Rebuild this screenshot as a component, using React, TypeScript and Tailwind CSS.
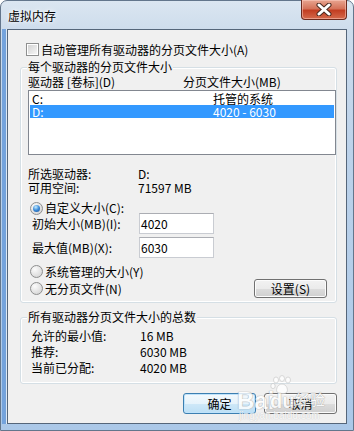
import React from "react";

function CheckBox() {
  return (
    <span className="flex h-[13px] w-[13px] shrink-0 items-center justify-center border border-[#8e8f8f] bg-white">
      <span className="h-[9px] w-[9px] bg-[linear-gradient(135deg,#d3d3d3,#f5f5f5)]" />
    </span>
  );
}

function Radio({ checked }: { checked?: boolean }) {
  return (
    <span className="flex h-[13px] w-[13px] shrink-0 items-center justify-center rounded-full border border-[#8e8f8f] bg-[radial-gradient(circle_at_35%_30%,#fbfbfb,#dcdcdc_70%,#cfcfcf)]">
      {checked && (
        <span className="h-[7px] w-[7px] rounded-full bg-[radial-gradient(circle_at_40%_30%,#c4ecff,#3a8ad8_50%,#1b4f92)]" />
      )}
    </span>
  );
}

function WinButton({ label, def }: { label: string; def?: boolean }) {
  return (
    <div
      className={
        def
          ? "flex h-[21px] w-[73px] items-center justify-center rounded-[3px] border border-[#3c7fb1] bg-[linear-gradient(180deg,#f3f9fd_0%,#e6f3fb_50%,#cfe8f8_50%,#bcdff5_100%)] shadow-[inset_0_0_0_1px_#bfe3fb]"
          : "flex h-[21px] w-[73px] items-center justify-center rounded-[3px] border border-[#707070] bg-[linear-gradient(180deg,#f2f2f2_0%,#ebebeb_50%,#dddddd_50%,#cfcfcf_100%)] shadow-[inset_0_0_0_1px_#fcfcfc]"
      }
    >
      <span className="text-[12px] leading-[12px] text-black">{label}</span>
    </div>
  );
}

function TextBox({ value }: { value: string }) {
  return (
    <div className="flex h-[21px] w-[75px] items-center border border-[#c9ccd2] border-t-[#abadb3] bg-white pl-[1px]">
      <span className="text-[12px] leading-[12px]">{value}</span>
    </div>
  );
}

export default function App() {
  return (
    <div className="h-[431px] w-[354px] overflow-hidden bg-white font-['Noto_Sans_CJK_SC','Noto_Sans',sans-serif] text-[12px] leading-[12px] text-black">
      <div className="relative flex h-[431px] w-[354px] flex-col rounded-t-[7px] border border-[#63768c] bg-[linear-gradient(180deg,#dbe6f1_0%,#cddcec_7%,#bcd2ea_35%,#abc8e8_100%)] pb-[6px] pl-[6px] pr-[6px]">
        {/* title bar */}
        <div className="flex h-[28px] shrink-0 items-start justify-between">
          <span className="ml-[1px] mt-[9px] text-[12px] leading-[12px] text-black [text-shadow:0_0_6px_#ffffff,0_0_3px_#ffffff]">
            虚拟内存
          </span>
          <div className="-mt-[1px] flex h-[20px] w-[46px] items-center justify-center rounded-b-[4px] border border-t-0 border-[#6b2a1e] bg-[linear-gradient(180deg,#e8a590_0%,#d5735a_45%,#c23e22_55%,#d56a4c_100%)] shadow-[inset_0_0_0_1px_rgba(255,210,200,0.5)]">
            <svg width="16" height="13" viewBox="0 0 16 13">
              <path d="M3 2 L13 11 M13 2 L3 11" stroke="#4a2a20" strokeWidth="5" strokeLinecap="round" />
              <path d="M3 2 L13 11 M13 2 L3 11" stroke="#ffffff" strokeWidth="3" strokeLinecap="round" />
            </svg>
          </div>
        </div>

        {/* client */}
        <div className="flex flex-1 flex-col border border-[#55667a] bg-[#f0f0f0] shadow-[-1px_0_0_0_#dde9f5,-5px_0_0_0_#74a3dc]">
          {/* auto manage checkbox */}
          <div className="ml-[18px] mt-[13px] flex h-[13px] items-center gap-[2px]">
            <CheckBox />
            <span>自动管理所有驱动器的分页文件大小(A)</span>
          </div>

          {/* group box 1 */}
          <div className="relative ml-[12px] mt-[11px] flex h-[236px] w-[317px] flex-col rounded-[3px] border border-[#d5dfe5] pl-[7px] shadow-[inset_0_0_0_1px_#ffffff]">
            <span className="absolute left-[6px] top-[-7px] bg-[#f0f0f0] px-[1px]">每个驱动器的分页文件大小</span>

            <div className="mt-[8px] flex h-[12px]">
              <span className="w-[155px]">驱动器 [卷标](D)</span>
              <span>分页文件大小(MB)</span>
            </div>

            <div className="mt-[2px] flex h-[65px] w-[308px] flex-col border border-[#828790] bg-white p-[1px]">
              <div className="flex h-[13px] items-center pl-[2px]">
                <span className="w-[181px]">C:</span>
                <span>托管的系统</span>
              </div>
              <div className="flex h-[13px] items-center bg-[#3399ff] pl-[2px] text-white">
                <span className="w-[181px]">D:</span>
                <span>4020 - 6030</span>
              </div>
            </div>

            <div className="mt-[13px] flex h-[12px]">
              <span className="w-[110px]">所选驱动器:</span>
              <span>D:</span>
            </div>
            <div className="mt-[2px] flex h-[12px]">
              <span className="w-[110px]">可用空间:</span>
              <span>71597 MB</span>
            </div>

            <div className="ml-[2px] mt-[9px] flex h-[10px] items-center gap-[2px]">
              <Radio checked />
              <span>自定义大小(C):</span>
            </div>

            <div className="ml-[4px] flex h-[21px] items-center">
              <span className="w-[107px]">初始大小(MB)(I):</span>
              <TextBox value="4020" />
            </div>
            <div className="ml-[4px] mt-[3px] flex h-[21px] items-center">
              <span className="w-[107px]">最大值(MB)(X):</span>
              <TextBox value="6030" />
            </div>

            <div className="ml-[2px] mt-[8px] flex h-[11px] items-center gap-[2px]">
              <Radio />
              <span>系统管理的大小(Y)</span>
            </div>
            <div className="ml-[2px] mt-[2px] flex h-[19px] items-center">
              <div className="flex w-[224px] items-center gap-[2px]">
                <Radio />
                <span>无分页文件(N)</span>
              </div>
              <div className="flex h-[19px] w-[73px] items-center justify-center rounded-[3px] border border-[#707070] bg-[linear-gradient(180deg,#f2f2f2_0%,#ebebeb_50%,#dddddd_50%,#cfcfcf_100%)] shadow-[inset_0_0_0_1px_#fcfcfc]">
                设置(S)
              </div>
            </div>
          </div>

          {/* group box 2 */}
          <div className="relative ml-[12px] mt-[14px] flex h-[67px] w-[317px] flex-col rounded-[3px] border border-[#d5dfe5] pl-[10px] shadow-[inset_0_0_0_1px_#ffffff]">
            <span className="absolute left-[6px] top-[-7px] bg-[#f0f0f0] px-[1px]">所有驱动器分页文件大小的总数</span>
            <div className="mt-[12px] flex h-[12px]">
              <span className="w-[109px]">允许的最小值:</span>
              <span>16 MB</span>
            </div>
            <div className="mt-[4px] flex h-[12px]">
              <span className="w-[109px]">推荐:</span>
              <span>6030 MB</span>
            </div>
            <div className="mt-[4px] flex h-[12px]">
              <span className="w-[109px]">当前已分配:</span>
              <span>4020 MB</span>
            </div>
          </div>

          {/* buttons */}
          <div className="ml-[175px] mt-[9px] flex gap-[8px]">
            <WinButton label="确定" def />
            <WinButton label="取消" />
          </div>
        </div>

        {/* Baidu watermark overlay */}
        <div className="pointer-events-none absolute left-[236px] top-[374px] h-[48px] w-[92px] opacity-80">
          <div className="absolute left-[33px] top-[0px]">
            <svg width="24" height="20" viewBox="0 0 24 20">
              <g fill="#ffffff" stroke="#c8c8c8" strokeWidth="0.8">
                <ellipse cx="6" cy="5" rx="2.5" ry="3" />
                <ellipse cx="12" cy="3.5" rx="2.5" ry="3" />
                <ellipse cx="18" cy="5" rx="2.5" ry="3" />
                <ellipse cx="3" cy="11" rx="2.2" ry="2.6" />
                <path d="M12 9 C7 9 5 16 8 18 C10 19 14 19 16 18 C19 16 17 9 12 9 Z" />
              </g>
            </svg>
          </div>
          <span className="absolute left-[0px] top-[14px] font-['Liberation_Sans',sans-serif] text-[24px] font-bold leading-[24px] text-white [text-shadow:0_0_1px_#9a9a9a,0_0_1px_#9a9a9a]">
            Bai
          </span>
          <span className="absolute left-[33px] top-[14px] font-['Liberation_Sans',sans-serif] text-[20px] font-bold leading-[24px] text-white [text-shadow:0_0_1px_#9a9a9a,0_0_1px_#9a9a9a]">
            du
          </span>
          <span className="absolute left-[58px] top-[16px] text-[15px] leading-[16px] text-white [text-shadow:0_0_1px_#9a9a9a,0_0_1px_#9a9a9a]">
            经验
          </span>
          <span className="absolute left-[2px] top-[36px] font-['Liberation_Sans',sans-serif] text-[10px] leading-[10px] text-white [text-shadow:0_0_1px_#aaaaaa]">
            jingyan.baidu.com
          </span>
        </div>
      </div>
    </div>
  );
}
